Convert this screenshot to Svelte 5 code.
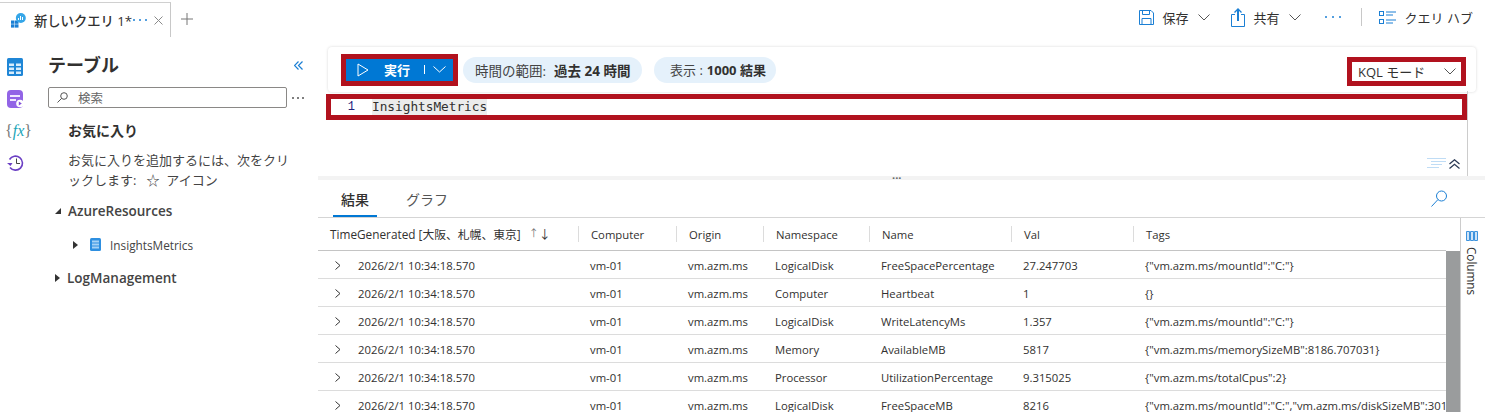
<script>
  const rows = [
    ['LogicalDisk', 'FreeSpacePercentage', '27.247703', '{"vm.azm.ms/mountId":"C:"}'],
    ['Computer', 'Heartbeat', '1', '{}'],
    ['LogicalDisk', 'WriteLatencyMs', '1.357', '{"vm.azm.ms/mountId":"C:"}'],
    ['Memory', 'AvailableMB', '5817', '{"vm.azm.ms/memorySizeMB":8186.707031}'],
    ['Processor', 'UtilizationPercentage', '9.315025', '{"vm.azm.ms/totalCpus":2}'],
    ['LogicalDisk', 'FreeSpaceMB', '8216', '{"vm.azm.ms/mountId":"C:","vm.azm.ms/diskSizeMB":301']
  ];
  const columns = ['Computer', 'Origin', 'Namespace', 'Name', 'Val', 'Tags'];
</script>

<div class="page">
  <header class="topbar">
    <div class="tab">
      <svg class="tab-icon" width="16" height="15" viewBox="0 0 16 15">
        <rect x="1" y="7.500" width="3.500" height="3.300" fill="#1b7fd4" />
        <rect x="5" y="7.500" width="3.500" height="3.300" fill="#1b7fd4" />
        <rect x="1" y="11.300" width="3.500" height="3.300" fill="#1b7fd4" />
        <rect x="5" y="11.300" width="3.500" height="3.300" fill="#1b7fd4" />
        <circle cx="10.800" cy="5" r="5" fill="#35a6e8" />
        <path d="M8.500 7v-2M10.500 7v-4M12.500 7v-3" stroke="#fff" stroke-width="1" />
      </svg>
      <span class="tab-name">新しいクエリ 1*</span>
      <span class="tab-dots"><i></i><i></i><i></i></span>
      <svg class="tab-close" width="9" height="9" viewBox="0 0 9 9"><path d="M0.500 0.500l8 8M8.500 0.500l-8 8" stroke="#8a8a8a" fill="none" /></svg>
    </div>
    <svg class="plus" width="12" height="12" viewBox="0 0 12 12"><path d="M6 0v12M0 6h12" stroke="#777" fill="none" /></svg>

    <div class="commands">
      <button class="cmd">
        <svg width="15" height="15" viewBox="0 0 15 15" fill="none" stroke="#1b7fd4"><path d="M0.500 0.500h11.500l2.500 2.500v11.500h-14z" /><path d="M3.500 0.500v4h7v-4M3 14.500v-6h9v6" /></svg>
        <span>保存</span>
        <svg width="12" height="7" viewBox="0 0 12 7"><path d="M0.500 0.500L6 6l5.500-5.500" stroke="#555" fill="none" /></svg>
      </button>
      <button class="cmd share">
        <svg width="14" height="19" viewBox="0 0 14 19" fill="none" stroke="#1b7fd4"><path d="M4 6.500H0.500v12h13v-12H10" /><path d="M7 13V1.500" stroke-width="2" /><path d="M3.500 4.500L7 1l3.500 3.500" stroke-width="1.300" /></svg>
        <span>共有</span>
        <svg width="12" height="7" viewBox="0 0 12 7"><path d="M0.500 0.500L6 6l5.500-5.500" stroke="#555" fill="none" /></svg>
      </button>
      <span class="more"><i></i><i></i><i></i></span>
      <span class="divider"></span>
      <button class="cmd hub">
        <svg width="17" height="13" viewBox="0 0 17 13" fill="none" stroke="#1b7fd4"><rect x="0.500" y="0.500" width="4" height="4" /><rect x="0.500" y="8.500" width="4" height="4" /><path d="M7 1h10M7 4h7M7 9h10M7 12h7" /></svg>
        <span>クエリ ハブ</span>
      </button>
    </div>
  </header>

  <div class="body">
    <nav class="rail">
      <svg width="16" height="18" viewBox="0 0 16 18">
        <rect width="16" height="18" rx="1.500" fill="#1f86d6" />
        <path d="M2 5.500h5v2.500H2zM9 5.500h5v2.500H9zM2 9.500h5v2.500H2zM9 9.500h5v2.500H9zM2 13.500h5v2.500H2zM9 13.500h5v2.500H9z" fill="#d8ecfb" />
      </svg>
      <svg width="17" height="18" viewBox="0 0 17 18">
        <rect width="16" height="18" rx="4" fill="#9264e6" />
        <path d="M3 5h10v2H3zM3 9h6v2H3z" fill="#f0e8ff" />
        <circle cx="13" cy="13.500" r="3.800" fill="#fff" />
        <path d="M11.800 11.500l3 2-3 2z" fill="#8250d8" />
      </svg>
      <span class="fx"><i>{'{'}</i><b>fx</b><i>{'}'}</i></span>
      <svg width="17" height="18" viewBox="0 0 17 18" fill="none">
        <path d="M2.500 5.500A7 7 0 1 1 3 13.500" stroke="#6b3fc4" stroke-width="1.600" />
        <path d="M0 9l3.500 3 2-3z" fill="#6b3fc4" />
        <path d="M9.500 4.500v5H13" stroke="#444" />
      </svg>
    </nav>

    <aside class="sidebar">
      <div class="side-head">
        <h2>テーブル</h2>
        <svg width="9" height="9" viewBox="0 0 9 9" fill="none" stroke="#1b7fd4" stroke-width="1.200"><path d="M4.500 0.500l-4 4 4 4M8.500 0.500l-4 4 4 4" /></svg>
      </div>
      <div class="search-row">
        <div class="search">
          <svg width="11" height="11" viewBox="0 0 11 11" fill="none" stroke="#555"><circle cx="7" cy="4" r="3.300" /><path d="M4.600 6.400L0.500 10.500" /></svg>
          <span>検索</span>
        </div>
        <span class="search-more"><i></i><i></i><i></i></span>
      </div>
      <div class="fav">
        <h3>お気に入り</h3>
        <p>お気に入りを追加するには、次をクリックします:&nbsp;&nbsp; ☆&nbsp; アイコン</p>
      </div>
      <div class="tree">
        <div class="group"><span class="tri open"></span>AzureResources</div>
        <div class="leaf">
          <span class="tri"></span>
          <svg width="12" height="13" viewBox="0 0 12 13">
            <rect width="11" height="13" rx="1.500" fill="#2e8fe0" />
            <path d="M2 2.500h7v2H2zM2 5.500h7v2H2zM2 8.500h7v2H2z" fill="#a5d2f5" />
          </svg>
          InsightsMetrics
        </div>
        <div class="group"><span class="tri"></span>LogManagement</div>
      </div>
    </aside>

    <main class="main">
      <div class="toolbar">
        <div class="run-mark">
          <button class="run">
            <svg width="12" height="14" viewBox="0 0 12 14" fill="none" stroke="#fff"><path d="M1 1l10 6-10 6z" /></svg>
            <span class="run-label">実行</span>
            <span class="run-sep"></span>
            <svg width="13" height="7" viewBox="0 0 13 7" fill="none" stroke="#fff"><path d="M0.500 0.500L6.500 6l6-5.500" /></svg>
          </button>
        </div>
        <span class="pill">時間の範囲: <b>過去 24 時間</b></span>
        <span class="pill show">表示 : <b>1000 結果</b></span>
        <div class="mode-mark">
          <span>KQL モード</span>
          <svg width="12" height="7" viewBox="0 0 12 7" fill="none" stroke="#555"><path d="M0.500 0.500L6 6l5.500-5.500" /></svg>
        </div>
      </div>

      <div class="editor">
        <div class="editor-line">
          <span class="line-no">1</span>
          <span class="code">InsightsMetrics</span>
        </div>
        <div class="editor-tools">
          <svg width="19" height="12" viewBox="0 0 19 12" fill="none" stroke="#bfdcf5"><path d="M0 0.500h19M4 3.500h15M4 6.500h11M0 9.500h12" /></svg>
          <svg width="11" height="10" viewBox="0 0 11 10" fill="none" stroke="#2b3a55" stroke-width="1.300"><path d="M0.500 5L5.500 0.800 10.500 5M0.500 9.500l5-4.200 5 4.200" /></svg>
        </div>
      </div>

      <div class="splitter"><span>···</span></div>

      <div class="result-tabs">
        <span class="rtab active">結果</span>
        <span class="rtab">グラフ</span>
        <svg class="find" width="17" height="17" viewBox="0 0 17 17" fill="none" stroke="#1b7fd4"><circle cx="10.500" cy="6" r="5" /><path d="M7 9.500L0.500 16.500" /></svg>
      </div>

      <div class="results">
        <div class="grid">
          <div class="row head">
            <div class="cell first">
              <span>TimeGenerated [大阪、札幌、東京]</span>
              <span class="sort"><small>↑</small>↓</span>
            </div>
            {#each columns as col}
              <div class="cell">{col}</div>
            {/each}
          </div>
          {#each rows as row}
            <div class="row">
              <div class="cell first">
                <svg width="6" height="9" viewBox="0 0 6 9" fill="none" stroke="#333"><path d="M0.500 0.500l4.500 4-4.500 4" /></svg>
                <span class="time">2026/2/1 10:34:18.570</span>
              </div>
              <div class="cell">vm-01</div>
              <div class="cell">vm.azm.ms</div>
              {#each row as value}
                <div class="cell">{value}</div>
              {/each}
            </div>
          {/each}
        </div>
        <div class="scrollbar"></div>
        <div class="side-columns">
          <svg width="12" height="10" viewBox="0 0 12 10" fill="#cfe4f8" stroke="#3d93dd"><path d="M0.500 0.500h3v9h-3zM4.500 0.500h3v9h-3zM8.500 0.500h3v9h-3z" /></svg>
          <span>Columns</span>
        </div>
      </div>
    </main>
  </div>
</div>

<style>
  :global(body) {
    margin: 0;
    background: #fff;
  }

  .page {
    width: 1485px;
    height: 412px;
    overflow: hidden;
    display: flex;
    flex-direction: column;
    color: #323130;
    font-family: "Open Sans", "Noto Sans CJK JP", sans-serif;
    font-size: 13px;
  }

  .topbar {
    height: 37px;
    flex: none;
    display: flex;
    align-items: center;
  }

  .tab {
    width: 160px;
    height: 34px;
    align-self: flex-end;
    padding-left: 10px;
    display: flex;
    align-items: center;
    border-right: 1px solid #c8c8c8;
    border-top: 1px solid #d0d0d0;
  }

  .tab-name {
    margin-left: 8px;
    font-size: 13.3px;
    font-weight: 500;
    white-space: nowrap;
  }

  .tab-dots,
  .more,
  .search-more {
    display: flex;
    gap: 4px;
  }

  .tab-dots i,
  .more i,
  .search-more i {
    width: 2px;
    height: 2px;
    background: #1b7fd4;
    border-radius: 50%;
  }

  .tab-dots {
    margin-left: 1px;
  }

  .tab-close {
    margin-left: 7px;
  }

  .plus {
    margin-left: 10px;
    margin-top: 1px;
  }

  .commands {
    margin-left: auto;
    margin-bottom: 3px;
    display: flex;
    align-items: center;
    padding-right: 12px;
  }

  .cmd {
    border: none;
    background: none;
    padding: 0;
    font: inherit;
    color: #323130;
    display: flex;
    align-items: center;
    gap: 9px;
  }

  .share {
    margin-left: 21px;
  }

  .more {
    margin-left: 24px;
    gap: 5px;
  }

  .divider {
    width: 1px;
    height: 18px;
    margin: 0 17px 0 20px;
    background: #c8c8c8;
  }

  .body {
    flex: 1;
    display: flex;
    min-height: 0;
  }

  .rail {
    width: 32px;
    flex: none;
    padding-top: 21px;
    padding-left: 7px;
    box-sizing: border-box;
    display: flex;
    flex-direction: column;
    align-items: flex-start;
    gap: 14px;
  }

  .fx {
    font-family: "Liberation Serif", serif;
    font-size: 16px;
    line-height: 18px;
    margin-left: -2px;
    color: #777;
    white-space: nowrap;
  }

  .fx b {
    color: #1aa5b8;
    font-weight: 400;
    font-style: italic;
  }

  .fx i {
    font-style: normal;
  }

  .sidebar {
    width: 286px;
    flex: none;
    padding-left: 16px;
    box-sizing: border-box;
  }

  .side-head {
    display: flex;
    align-items: center;
    justify-content: space-between;
    height: 24px;
    margin-top: 16px;
    padding-right: 15px;
  }

  h2 {
    margin: 0;
    font-size: 18px;
    font-weight: 700;
    line-height: 24px;
  }

  .search-row {
    display: flex;
    align-items: center;
    margin-top: 10px;
  }

  .search {
    width: 239px;
    height: 21px;
    border: 1px solid #8a8886;
    border-radius: 2px;
    display: flex;
    align-items: center;
    gap: 10px;
    padding-left: 8px;
    box-sizing: border-box;
    color: #666;
    font-size: 12.5px;
  }

  .search-more {
    margin-left: 5px;
    gap: 3px;
  }

  .search-more i {
    background: #555;
  }

  .fav {
    padding-left: 20px;
    padding-right: 20px;
  }

  h3 {
    margin: 12px 0 0;
    font-size: 14px;
    font-weight: 700;
    line-height: 22px;
  }

  .fav p {
    margin: 8px 0 0;
    font-size: 13px;
    line-height: 20px;
    color: #444;
    line-break: loose;
  }

  .tree {
    margin-top: 10px;
  }

  .group {
    display: flex;
    align-items: center;
    gap: 7px;
    padding-left: 7px;
    height: 21px;
    font-size: 13.5px;
    font-weight: 600;
    color: #444;
  }

  .leaf {
    display: flex;
    align-items: center;
    height: 45px;
    margin-top: 1px;
    padding-left: 25px;
    font-size: 11.8px;
    color: #444;
  }

  .leaf svg {
    margin: 0 8px 0 12px;
  }

  .tri {
    width: 0;
    height: 0;
    border-left: 5px solid #333;
    border-top: 4px solid transparent;
    border-bottom: 4px solid transparent;
  }

  .tri.open {
    border-style: solid;
    border-width: 0 0 6px 6px;
    border-color: transparent transparent #333 transparent;
  }

  .main {
    flex: 1;
    min-width: 0;
    display: flex;
    flex-direction: column;
  }

  .toolbar {
    height: 45px;
    margin: 10px 9px 0 10px;
    flex: none;
    display: flex;
    align-items: center;
    padding: 0 10px 0 13px;
    box-sizing: border-box;
    border-radius: 4px;
    box-shadow: 0 0 3px rgba(0, 0, 0, 0.16);
  }

  .run-mark {
    border: 5px solid #b1121e;
    flex: none;
  }

  .run {
    width: 107px;
    height: 22px;
    border: none;
    padding: 0 7px 0 11px;
    background: #0078d4;
    color: #fff;
    font: inherit;
    font-weight: 600;
    display: flex;
    align-items: center;
  }

  .run-label {
    margin-left: 15px;
  }

  .run-sep {
    width: 1px;
    height: 9px;
    margin: 0 8px 0 14px;
    background: #fff;
  }

  .pill {
    height: 26px;
    margin-left: 5px;
    padding: 0 0 0 12px;
    width: 179px;
    box-sizing: border-box;
    display: flex;
    align-items: center;
    gap: 8px;
    border-radius: 13px;
    background: #e5f1fb;
    color: #444;
    font-size: 13.5px;
    white-space: nowrap;
  }

  .pill.show {
    margin-left: 12px;
    width: 122px;
    gap: 4px;
    padding: 0 0 0 16px;
    font-size: 13px;
  }

  .pill b {
    color: #323130;
    font-weight: 700;
  }

  .mode-mark {
    width: 119px;
    height: 29px;
    margin-left: auto;
    margin-top: 3px;
    border: 5px solid #b1121e;
    box-sizing: border-box;
    display: flex;
    align-items: center;
    justify-content: space-between;
    padding: 0 5px 0 6px;
  }

  .editor {
    height: 85px;
    flex: none;
    margin: -1px 17px 0 8px;
    position: relative;
    border-right: 1px solid #ccc;
  }

  .editor-line {
    height: 26px;
    margin-top: 3px;
    border: 5px solid #b1121e;
    box-sizing: border-box;
    display: flex;
    align-items: center;
  }

  .line-no {
    width: 24px;
    text-align: right;
    color: #22227a;
    font-family: "Liberation Mono", monospace;
    font-size: 12px;
  }

  .code {
    margin-left: 17px;
    background: #ececec;
    font-family: "DejaVu Sans Mono", monospace;
    font-size: 12.75px;
    line-height: 16px;
  }

  .editor-tools {
    position: absolute;
    right: 7px;
    bottom: 6px;
    display: flex;
    align-items: center;
    gap: 3px;
  }

  .splitter {
    height: 4px;
    flex: none;
    background: #f3f3f3;
    position: relative;
  }

  .splitter span {
    position: absolute;
    left: 574px;
    top: -6px;
    font-size: 11px;
    font-weight: 700;
    color: #666;
  }

  .result-tabs {
    height: 38px;
    flex: none;
    display: flex;
    align-items: center;
    padding-left: 15px;
    border-bottom: 1px solid #d5d5d5;
    box-sizing: border-box;
  }

  .rtab {
    font-size: 14px;
    height: 37px;
    line-height: 40px;
    padding: 0 8px;
    margin-right: 21px;
    color: #555;
    box-sizing: border-box;
  }

  .rtab.active {
    color: #323130;
    font-weight: 500;
    border-bottom: 2px solid #0078d4;
  }

  .find {
    margin-left: auto;
    margin-right: 37px;
  }

  .results {
    flex: 1;
    display: flex;
    min-height: 0;
  }

  .grid {
    flex: 1;
    min-width: 0;
    overflow: hidden;
  }

  .row {
    display: grid;
    grid-template-columns: 260px 98px 87px 106px 142px 122px 1fr;
    height: 28px;
    align-items: center;
    border-bottom: 1px solid #dcdcdc;
    box-sizing: border-box;
  }

  .row.head {
    height: 33px;
    border-bottom: 1px solid #c4c4c4;
  }

  .row.head .cell:not(.first) {
    border-left: 1px solid #dcdcdc;
    padding-top: 0;
  }

  .row.head .cell {
    height: 16px;
    line-height: 18px;
    padding-top: 0;
  }

  .cell {
    padding-left: 12px;
    padding-top: 2px;
    font-size: 11.3px;
    white-space: nowrap;
    overflow: hidden;
  }

  .cell.first {
    display: flex;
    align-items: center;
    padding-left: 17px;
  }

  .row.head .cell.first {
    padding-left: 12px;
    font-size: 11.8px;
  }

  .time {
    margin-left: 17px;
  }

  .sort {
    margin-left: 8px;
    font-size: 12px;
    white-space: nowrap;
  }

  .sort small {
    font-size: 10px;
    vertical-align: 2px;
    color: #777;
  }

  .scrollbar {
    width: 14px;
    flex: none;
    margin-top: 33px;
    background: #9a9c9d;
  }

  .side-columns {
    width: 25px;
    flex: none;
    border-left: 1px solid #ccc;
    box-sizing: border-box;
    display: flex;
    flex-direction: column;
    align-items: center;
    padding-top: 13px;
    padding-right: 3px;
    gap: 6px;
  }

  .side-columns span {
    writing-mode: vertical-rl;
    font-size: 11.7px;
  }
</style>
